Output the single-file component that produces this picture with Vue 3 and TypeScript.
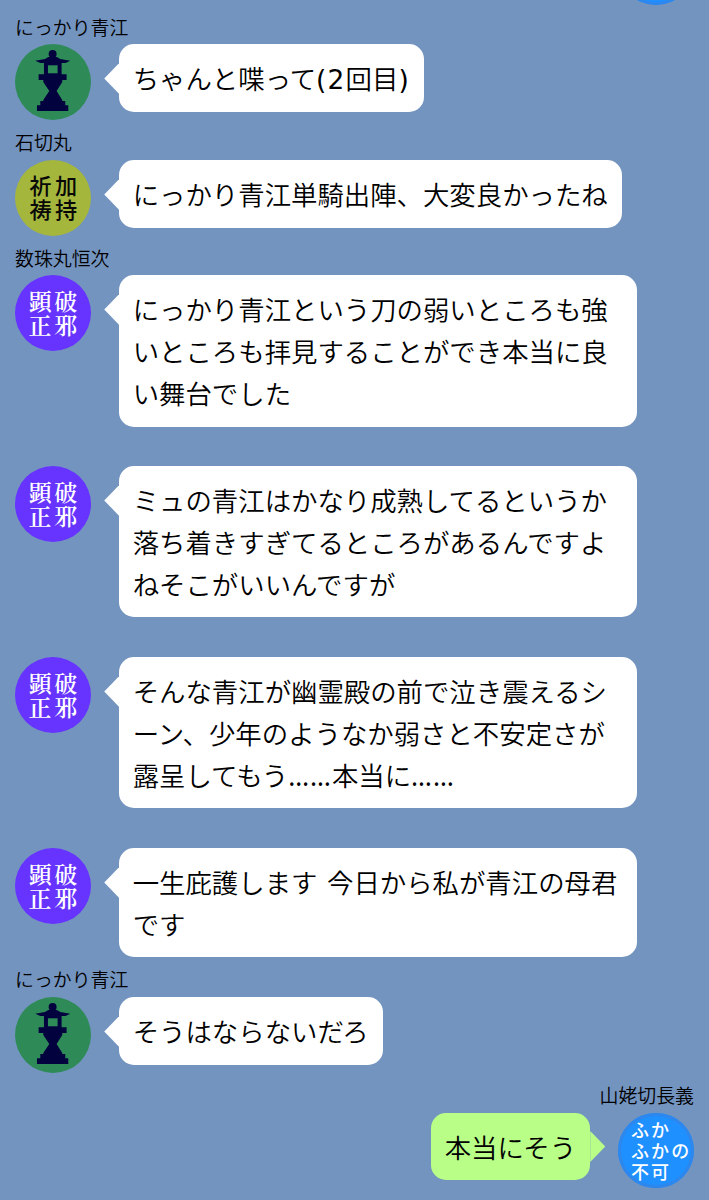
<script setup lang="ts">
type Avatar = 'lantern' | 'prayer' | 'truth' | 'fluffy'

interface Part {
  text: string
  kind?: 'dots' | 'latin'
}

interface Message {
  id: number
  name?: string
  avatar: Avatar
  mine?: boolean
  lines: Part[][]
}

interface Glyph {
  char: string
  x: number
  y: number
}

const messages: Message[] = [
  {
    id: 1,
    name: 'にっかり青江',
    avatar: 'lantern',
    lines: [[{ text: 'ちゃんと喋って' }, { text: '(2', kind: 'latin' }, { text: '回目' }, { text: ')', kind: 'latin' }]],
  },
  { id: 2, name: '石切丸', avatar: 'prayer', lines: [[{ text: 'にっかり青江単騎出陣、大変良かったね' }]] },
  {
    id: 3,
    name: '数珠丸恒次',
    avatar: 'truth',
    lines: [
      [{ text: 'にっかり青江という刀の弱いところも強' }],
      [{ text: 'いところも拝見することができ本当に良' }],
      [{ text: 'い舞台でした' }],
    ],
  },
  {
    id: 4,
    avatar: 'truth',
    lines: [
      [{ text: 'ミュの青江はかなり成熟してるというか' }],
      [{ text: '落ち着きすぎてるところがあるんですよ' }],
      [{ text: 'ねそこがいいんですが' }],
    ],
  },
  {
    id: 5,
    avatar: 'truth',
    lines: [
      [{ text: 'そんな青江が幽霊殿の前で泣き震えるシ' }],
      [{ text: 'ーン、少年のようなか弱さと不安定さが' }],
      [
        { text: '露呈してもう' },
        { text: '……', kind: 'dots' },
        { text: '本当に' },
        { text: '……', kind: 'dots' },
      ],
    ],
  },
  {
    id: 6,
    avatar: 'truth',
    lines: [
      [{ text: '一生庇護します' }, { text: ' ', kind: 'latin' }, { text: '今日から私が青江の母君' }],
      [{ text: 'です' }],
    ],
  },
  { id: 7, name: 'にっかり青江', avatar: 'lantern', lines: [[{ text: 'そうはならないだろ' }]] },
  { id: 8, name: '山姥切長義', avatar: 'fluffy', mine: true, lines: [[{ text: '本当にそう' }]] },
]

const glyphs: Record<Avatar, Glyph[]> = {
  lantern: [],
  prayer: [
    { char: '祈', x: 25.5, y: 34.4 },
    { char: '加', x: 51.2, y: 34.4 },
    { char: '祷', x: 25.5, y: 58.2 },
    { char: '持', x: 51.2, y: 58.2 },
  ],
  truth: [
    { char: '顕', x: 25.3, y: 35.2 },
    { char: '破', x: 50.8, y: 35.2 },
    { char: '正', x: 25, y: 58.8 },
    { char: '邪', x: 50.8, y: 58.8 },
  ],
  fluffy: [
    { char: 'ふ', x: 22, y: 24 },
    { char: 'か', x: 42, y: 24 },
    { char: 'ふ', x: 22, y: 45 },
    { char: 'か', x: 42, y: 45 },
    { char: 'の', x: 62.3, y: 45 },
    { char: '不', x: 22, y: 66 },
    { char: '可', x: 42, y: 66 },
  ],
}
</script>

<template>
  <main class="chat">
    <div class="earlier">
      <span class="disc fluffy"></span>
    </div>
    <section v-for="m in messages" :key="m.id" class="entry" :class="{ mine: m.mine }">
      <div class="name">{{ m.name }}</div>
      <div class="row">
        <div class="disc" :class="m.avatar">
          <svg v-if="m.avatar === 'lantern'" viewBox="0 0 228 228">
            <g fill="#02023f">
              <circle cx="113" cy="30" r="12" />
              <path d="M100 39H126L136 45L166 50L152 57H140V91H155V108H142V114L125 141L142 168V171H151V184H160V201H66V184H76V171H85V168L103 141L85 114V108H71V91H87V57H76L61 50L90 45Z" />
            </g>
            <rect x="99" y="64" width="29" height="24" fill="#2e8b57" />
          </svg>
          <svg v-else viewBox="0 0 76 76">
            <text v-for="(g, i) in glyphs[m.avatar]" :key="i" :x="g.x" :y="g.y" text-anchor="middle">{{ g.char }}</text>
          </svg>
        </div>
        <div class="bubble">
          <svg class="tail" viewBox="0 0 15 31"><path d="M15 0L0 15.5L15 31Z" /></svg>
          <div v-for="(line, i) in m.lines" :key="i" class="line"><span v-for="(p, j) in line" :key="j" :class="p.kind">{{ p.text }}</span></div>
        </div>
      </div>
    </section>
  </main>
</template>

<style>
body {
  margin: 0;
  background: #7494c0;
}
</style>

<style scoped>
.chat {
  box-sizing: border-box;
  height: 1200px;
  overflow: hidden;
  padding: 0 15px;
  background: #7494c0;
  color: #000;
  font-family: "Noto Sans CJK JP", sans-serif;
  font-weight: 350;
}

.earlier {
  display: flex;
  justify-content: flex-end;
  margin-top: -71.1px;
}

.name {
  box-sizing: border-box;
  height: 39.6px;
  padding-top: 8px;
  font-size: 18.9px;
  line-height: 28px;
  white-space: nowrap;
}

.row {
  display: flex;
  align-items: flex-start;
  gap: 28px;
}

.mine .row {
  flex-direction: row-reverse;
}

.mine .name {
  text-align: right;
}

.disc {
  box-sizing: border-box;
  flex: none;
  width: 75.9px;
  height: 75.9px;
  border-radius: 50%;
  overflow: hidden;
}

.disc svg {
  display: block;
  width: 75.9px;
  height: 75.9px;
}

.lantern {
  background: #2e8b57;
}

.prayer {
  background: #a5b63c;
  fill: #080808;
  font-size: 22.2px;
  font-weight: 500;
}

.truth {
  background: #6633ff;
  fill: #fff;
  font-family: "Noto Serif CJK JP", "Noto Sans CJK JP", serif;
  font-size: 23px;
  font-weight: 600;
}

.fluffy {
  background: #1e90ff;
  box-shadow: inset 0 0 0 3px #2d87ec;
  fill: #fff;
  font-size: 18px;
  font-weight: 500;
}

.bubble {
  position: relative;
  box-sizing: border-box;
  padding: 13.1px 14px 13.1px 13.8px;
  border-radius: 15px;
  background: #fff;
  fill: #fff;
  font-size: 26.4px;
}

.row .bubble {
  max-width: 518px;
}

.entry:not(.mine) .bubble:has(.line + .line) {
  width: 518px;
}

.mine .bubble {
  background: #b9ff87;
  fill: #b9ff87;
}

.tail {
  position: absolute;
  top: 18.8px;
  left: -15px;
  width: 15.5px;
  height: 31px;
}

.mine .tail {
  left: auto;
  right: -15px;
  transform: scaleX(-1);
}

.line {
  height: 41.7px;
  line-height: 41.7px;
  white-space: pre;
}

.latin {
  font-family: "DejaVu Sans", sans-serif;
  font-weight: 400;
  letter-spacing: 1.2px;
}

.dots {
  font-family: "Noto Sans", sans-serif;
  font-weight: 400;
  letter-spacing: 1px;
}
</style>
